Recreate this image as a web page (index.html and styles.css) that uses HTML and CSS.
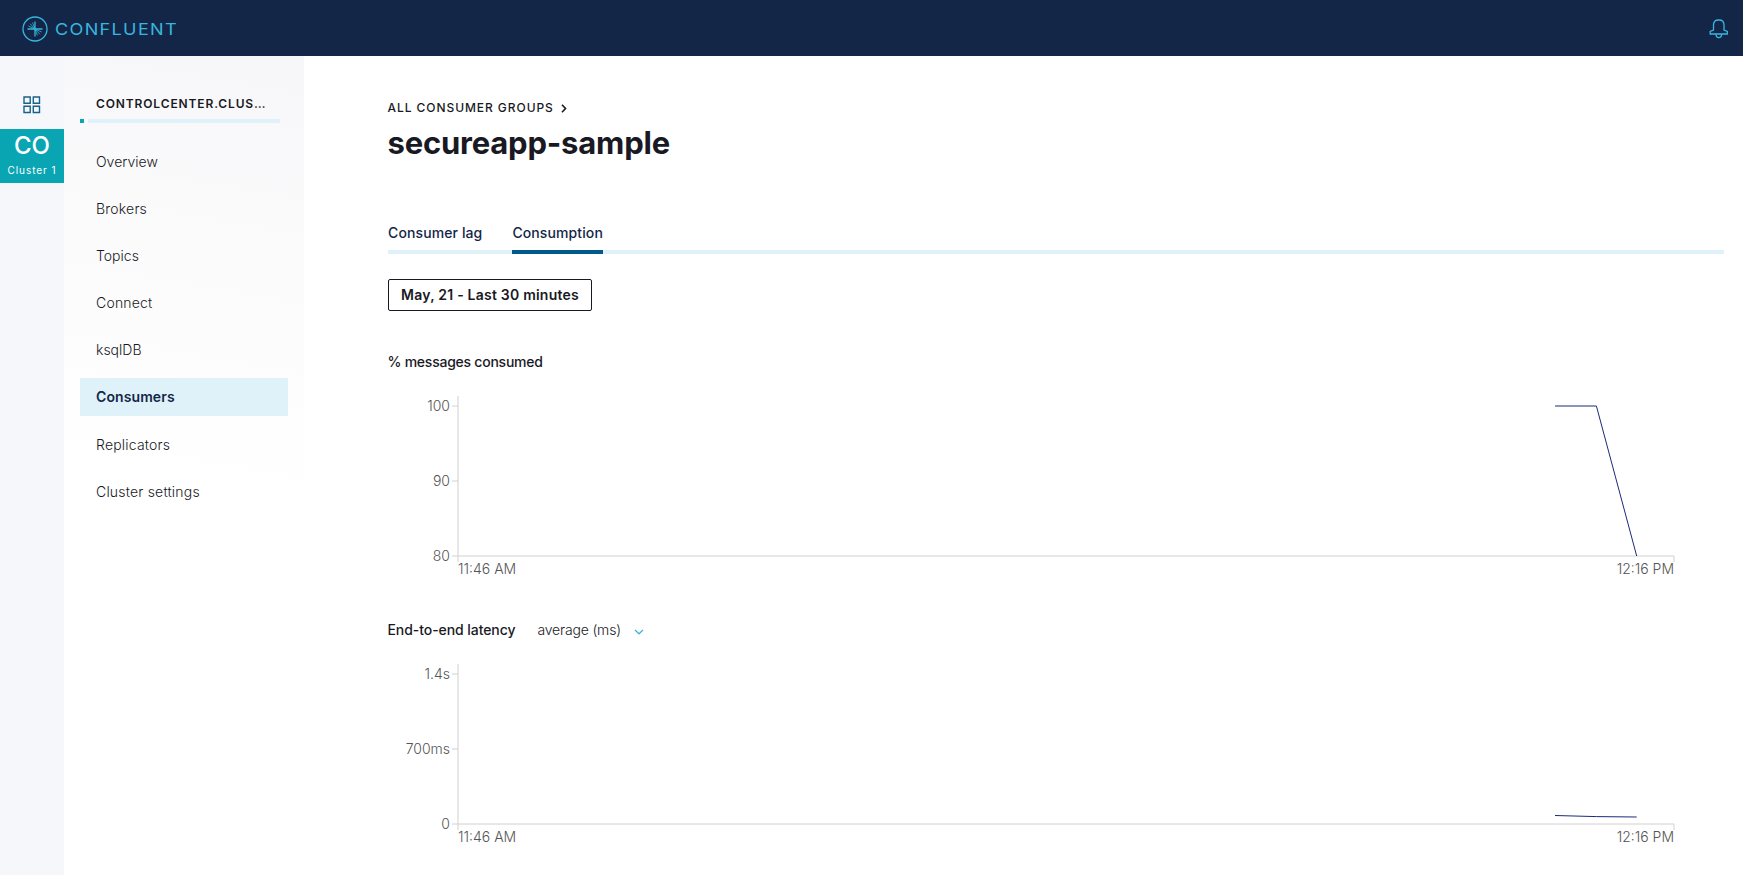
FILE: index.html
```html
<!DOCTYPE html>
<html lang="en">
<head>
<meta charset="utf-8">
<title>Control Center</title>
<link rel="stylesheet" href="styles.css">
</head>
<body>
<header class="topbar">
  <a class="brand">
    <svg class="brand-mark" viewBox="0 0 26 26" width="26" height="26">
      <circle cx="13" cy="13" r="12"/>
      <path class="axes" d="M13 5.5V20.5M5.5 13H20.5"/>
      <path class="rays" d="M10.6 6.6 12.7 12.2M8.2 7.8 12.6 12.6M6.4 10 12.2 12.7M15.4 19.4 13.3 13.8M17.8 18.2 13.4 13.4M19.6 16 13.8 13.3"/>
    </svg>
    <svg class="brand-name" width="124" height="24"><text x="0" y="18.3" textLength="123" lengthAdjust="spacingAndGlyphs">CONFLUENT</text></svg>
  </a>
  <svg class="bell" viewBox="0 0 20 20" width="20" height="20">
    <path d="M4.5 11V6Q4.5 1 9.5 1H10Q15 1 15 6V11L18.3 12.5V15H1.2V12.5ZM7 15Q7 18.6 9.8 18.6T12.6 15"/>
  </svg>
</header>
<div class="shell">
  <aside class="rail">
    <svg class="grid-icon" viewBox="0 0 18 18" width="18" height="18">
      <path d="M1 1H7.2V7.2H1ZM10.3 1H16.5V7.2H10.3ZM1 10.3H7.2V16.5H1ZM10.3 10.3H16.5V16.5H10.3Z"/>
    </svg>
    <div class="tile"><span class="tile-code">CO</span><span class="tile-name">Cluster 1</span></div>
  </aside>
  <nav class="sidebar">
    <div class="cluster">CONTROLCENTER.CLUS…</div>
    <div class="health"><i class="health-on"></i><i class="health-rest"></i></div>
    <ul class="menu">
      <li class="tight">Overview</li>
      <li>Brokers</li>
      <li class="tight">Topics</li>
      <li>Connect</li>
      <li class="tight">ksqlDB</li>
      <li class="selected">Consumers</li>
      <li>Replicators</li>
      <li>Cluster settings</li>
    </ul>
  </nav>
  <main class="main">
    <div class="crumb">ALL CONSUMER GROUPS
      <svg width="6" height="9" viewBox="0 0 6 9"><path d="M1 .8 4.5 4.5 1 8.2"/></svg>
    </div>
    <h1 class="title">secureapp-sample</h1>
    <div class="tabs">
      <span class="tab">Consumer lag</span>
      <span class="tab active">Consumption</span>
    </div>
    <button class="range">May, 21 - Last 30 minutes</button>
    <section class="panel">
      <div class="panel-head"><h2 class="narrow">% messages consumed</h2></div>
      <svg class="chart" width="1335" height="190" viewBox="388 390 1335 190">
        <path class="axis" d="M458 396V562M452 556H1674V562M452 406H458M452 481H458"/>
        <g class="ylabels"><text x="450" y="411">100</text><text x="450" y="486">90</text><text x="450" y="561">80</text></g>
        <text x="458" y="574">11:46 AM</text>
        <text class="end" x="1674" y="574">12:16 PM</text>
        <path class="series" d="M1555 406H1596.4L1636.7 556"/>
      </svg>
    </section>
    <section class="panel">
      <div class="panel-head"><h2>End-to-end latency</h2><span class="metric">average (ms)</span>
        <svg width="10" height="6" viewBox="0 0 10 6"><path class="caret" d="M1 1 5 4.8 9 1"/></svg>
      </div>
      <svg class="chart" width="1335" height="190" viewBox="388 658 1335 190">
        <path class="axis" d="M458 664V830M452 824H1674V830M452 674H458M452 749H458"/>
        <g class="ylabels"><text x="450" y="679">1.4s</text><text x="450" y="754">700ms</text><text x="450" y="829">0</text></g>
        <text x="458" y="842">11:46 AM</text>
        <text class="end" x="1674" y="842">12:16 PM</text>
        <path class="series" d="M1555 815.5L1596.4 816.6L1636.7 817"/>
      </svg>
    </section>
  </main>
</div>
</body>
</html>
```
FILE: styles.css
```css
* { box-sizing: border-box; }
body { margin: 0; height: 875px; overflow: hidden; background: #fff; color: #191924; font-family: Inter, "Liberation Sans", sans-serif; font-size: 14px; }
svg { display: block; flex: none; }
.topbar { height: 56px; background: #142647; display: flex; align-items: center; justify-content: space-between; padding: 1px 14px 0 21.5px; }
.brand { display: flex; align-items: center; gap: 7px; }
.brand-mark, .bell { fill: none; stroke: #38b6de; stroke-width: 1.3; }
.brand-mark .axes { stroke-width: 1.3; }
.brand-mark .rays { stroke-width: .8; }
.brand-name text { fill: #38b6de; font-size: 16.5px; font-weight: 400; letter-spacing: 1.2px; }
.shell { display: flex; height: 819px; }
.rail { width: 64px; flex: none; background: #f6f7fa; padding-top: 40px; display: flex; flex-direction: column; align-items: center; }
.grid-icon { fill: none; stroke: #18618c; stroke-width: 1.4; }
.tile { width: 64px; height: 54px; margin-top: 15px; background: #0aa5b3; color: #fff; display: flex; flex-direction: column; align-items: center; }
.tile-code { font-size: 24px; line-height: 28px; margin-top: 3px; font-weight: 500; }
.tile-name { font-size: 10px; line-height: 12px; margin-top: 4px; font-weight: 400; letter-spacing: .95px; white-space: nowrap; }
.sidebar { width: 240px; flex: none; padding: 39px 16px 0; background: linear-gradient(190deg, #f7f7f9 0, #fff 440px); }
.cluster { padding-left: 16px; font-size: 12px; line-height: 17px; font-weight: 600; letter-spacing: .87px; white-space: nowrap; }
.health { display: flex; gap: 4px; margin-top: 7px; }
.health-on { width: 4px; height: 4px; background: #0aa5b3; }
.health-rest { width: 192px; height: 4px; background: #dff2fa; }
.menu { list-style: none; margin: 20px 0 0; padding: 0; display: flex; flex-direction: column; gap: 9.1px; }
.menu li { height: 38px; line-height: 38px; padding-left: 16px; font-weight: 300; letter-spacing: .2px; }
.menu .tight { letter-spacing: 0; }
.menu .selected { background: #dff2fa; color: #142647; font-weight: 600; letter-spacing: .1px; }
.main { flex: 1; padding: 44px 19px 0 84px; }
.crumb { display: flex; align-items: center; gap: 7px; font-size: 12px; line-height: 16px; font-weight: 500; letter-spacing: .94px; margin-left: -.5px; }
.crumb path { fill: none; stroke: #191924; stroke-width: 1.6; }
.title { margin: 7px 0 0 -.5px; font-size: 31px; line-height: 40px; font-weight: 700; letter-spacing: -.2px; }
.tabs { display: flex; gap: 30px; margin-top: 59px; height: 32px; border-bottom: 4px solid #dff2fa; }
.tab { height: 32px; line-height: 22px; font-weight: 500; color: #142647; letter-spacing: .11px; white-space: nowrap; }
.tab.active { border-bottom: 4px solid #005a8c; }
.range { display: block; margin: 25px 0 0; width: 204px; height: 32px; padding: 0 0 1px; border: 1px solid #191924; border-radius: 2px; background: #fff; color: #191924; font: 600 14px Inter, sans-serif; letter-spacing: .22px; white-space: nowrap; }
.panel { height: 268px; }
.panel-head { height: 79px; padding-top: 41px; display: flex; align-items: flex-start; line-height: 20px; }
.panel-head h2 { margin: 0 0 0 -.5px; font-size: 14px; font-weight: 500; letter-spacing: -.07px; }
.panel-head .narrow { letter-spacing: -.24px; }
.metric { margin-left: 22px; font-weight: 300; letter-spacing: -.17px; }
.panel-head svg { margin: 9px 0 0 13.5px; }
.caret { fill: none; stroke: #38b6de; stroke-width: 1.2; }
.chart text { font-size: 14px; font-weight: 300; fill: #555; }
.chart .ylabels text, .chart .end { text-anchor: end; }
.axis { fill: none; stroke: #d0d0d0; stroke-width: 1; }
.series { fill: none; stroke: #1b2a7b; stroke-width: 1; }
```
